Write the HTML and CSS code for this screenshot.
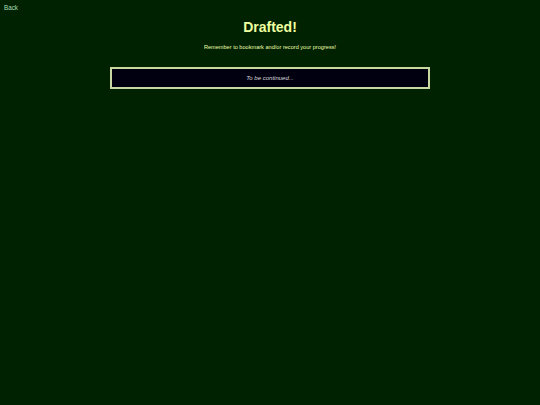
FILE: index.html
```html
<!DOCTYPE html>
<html>
<head>
<meta charset="utf-8">
<link rel="stylesheet" href="styles.css">
</head>
<body>
<div class="top"><a class="back" href="#">Back</a></div>
<main class="content">
  <h1 class="title">Drafted!</h1>
  <p class="note">Remember to bookmark and/or record your progress!</p>
  <div class="box">To be continued...</div>
</main>
</body>
</html>
```
FILE: styles.css
```css
html, body {
  margin: 0;
  padding: 0;
  background: #002200;
  height: 100%;
}
body {
  font-family: "Liberation Sans", Arial, sans-serif;
  color: #eeffaa;
}
.top {
  padding: 1px 0 0 4px;
  height: 10px;
  line-height: 8px;
}
.back {
  font-size: 6.3px;
  color: #aaddbb;
  text-decoration: none;
}
.content {
  display: flex;
  flex-direction: column;
  align-items: center;
}
.title {
  margin: 7px 0 0;
  font-size: 14px;
  line-height: 18px;
  font-weight: bold;
  color: #eeffa0;
}
.note {
  margin: 7px 0 0;
  font-size: 5.6px;
  line-height: 8px;
  color: #eeffaa;
}
.box {
  margin-top: 16px;
  box-sizing: border-box;
  width: 320px;
  height: 22px;
  border: 2px solid #c8d8a0;
  background: #000011;
  color: #dddddd;
  font-style: italic;
  font-size: 6px;
  line-height: 18px;
  text-align: center;
}
```
